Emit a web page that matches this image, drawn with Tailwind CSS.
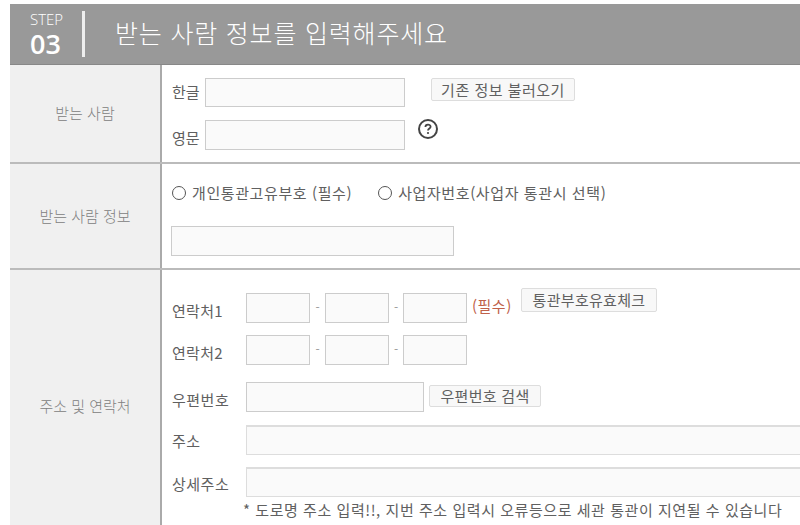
<!DOCTYPE html>
<html lang="ko">
<head>
  <meta charset="UTF-8" />
  <title>받는 사람 정보</title>
  <script src="https://cdn.jsdelivr.net/npm/@tailwindcss/browser@4"></script>
</head>
<body class="bg-white w-[800px] h-[525px] overflow-hidden font-['Noto_Sans_CJK_KR',sans-serif] text-[15px] text-[#606060]">
  <div class="pl-[10px] pt-[4px]">

    <!-- Header -->
    <header class="h-[61px] bg-[#999] border-b border-[#888] flex items-center text-white">
      <div class="w-[44px] ml-[20px] font-['Open_Sans',sans-serif]">
        <div class="text-[15px] leading-[15px] font-light mb-[5px]">STEP</div>
        <div class="text-[27px] leading-[24px] font-semibold">03</div>
      </div>
      <div class="w-[3px] h-[46px] bg-[#eee] ml-[8px]"></div>
      <h1 class="ml-[30px] text-[25px] font-light tracking-[0.8px] -mt-[2px]">받는 사람 정보를 입력해주세요</h1>
    </header>

    <!-- Row 1 -->
    <section class="flex h-[99px] border-b-2 border-[#bbb]">
      <div class="w-[152px] bg-[#f0f0f0] border-r-2 border-[#aaa] flex items-center justify-center text-[#808080] font-light">받는 사람</div>
      <div class="flex-1 pl-[10px] pt-[13px]">
        <div class="flex">
          <span class="w-[33px] pt-[2px] leading-[24px]">한글</span>
          <input class="w-[200px] h-[29px] bg-[#fafafa] border border-[#ccc]" />
          <button class="ml-[26px] w-[144px] h-[23px] leading-[19px] bg-[#f8f8f8] border border-[#ddd] rounded-[2px] tracking-[0.5px]">기존 정보 불러오기</button>
        </div>
        <div class="flex mt-[13px]">
          <span class="w-[33px] pt-[6px] leading-[24px]">영문</span>
          <input class="w-[200px] h-[30px] bg-[#fafafa] border border-[#ccc]" />
          <svg class="ml-[12px] -mt-[2px]" width="22" height="22" viewBox="0 0 22 22">
            <circle cx="11" cy="11" r="9" fill="none" stroke="#444" stroke-width="2" />
            <path d="M8.4 9 C8.4 5.8 13.6 5.8 13.6 8.8 C13.6 10.6 11 10.6 11 12.6" fill="none" stroke="#444" stroke-width="1.8" />
            <circle cx="11" cy="15" r="1.1" fill="#444" />
          </svg>
        </div>
      </div>
    </section>

    <!-- Row 2 -->
    <section class="flex h-[106px] border-b-2 border-[#bbb]">
      <div class="w-[152px] bg-[#f0f0f0] border-r-2 border-[#aaa] flex items-center justify-center text-[#808080] font-light">받는 사람 정보</div>
      <div class="flex-1 pl-[9px] pt-[18px]">
        <div class="flex items-center h-[22px]">
          <span class="w-[14px] h-[14px] rounded-full border border-[#555] ml-[1px]"></span>
          <span class="ml-[6px] tracking-[0.6px]">개인통관고유부호 (필수)</span>
          <span class="w-[14px] h-[14px] rounded-full border border-[#555] ml-[26px]"></span>
          <span class="ml-[6px] tracking-[0.6px]">사업자번호(사업자 통관시 선택)</span>
        </div>
        <input class="block mt-[22px] w-[283px] h-[30px] bg-[#fafafa] border border-[#ccc]" />
      </div>
    </section>

    <!-- Row 3 -->
    <section class="flex h-[272px]">
      <div class="w-[152px] bg-[#f0f0f0] border-r-2 border-[#aaa] flex items-center justify-center text-[#808080] font-light">주소 및 연락처</div>
      <div class="flex-1 pl-[9px] pt-[23px] min-w-0">
        <div class="flex h-[30px]">
          <span class="w-[75px] pl-[1px] pt-[6px] leading-[24px] tracking-[0.3px]">연락처1</span>
          <input class="w-[64px] h-[30px] bg-[#fafafa] border border-[#ccc]" />
          <span class="w-[15px] text-center text-[12px] leading-[28px] text-[#999]">-</span>
          <input class="w-[64px] h-[30px] bg-[#fafafa] border border-[#ccc]" />
          <span class="w-[14px] text-center text-[12px] leading-[28px] text-[#999]">-</span>
          <input class="w-[64px] h-[30px] bg-[#fafafa] border border-[#ccc]" />
          <span class="w-[45px] pl-[5px] text-[#c0614a] leading-[26px] whitespace-nowrap tracking-[0.5px]">(필수)</span>
          <button class="ml-[9px] -mt-[5px] w-[136px] h-[24px] leading-[20px] bg-[#f8f8f8] border border-[#ddd] rounded-[2px] tracking-[0.3px]">통관부호유효체크</button>
        </div>
        <div class="flex h-[30px] mt-[12px]">
          <span class="w-[75px] pl-[1px] pt-[6px] leading-[24px] tracking-[0.3px]">연락처2</span>
          <input class="w-[64px] h-[30px] bg-[#fafafa] border border-[#ccc]" />
          <span class="w-[15px] text-center text-[12px] leading-[28px] text-[#999]">-</span>
          <input class="w-[64px] h-[30px] bg-[#fafafa] border border-[#ccc]" />
          <span class="w-[14px] text-center text-[12px] leading-[28px] text-[#999]">-</span>
          <input class="w-[64px] h-[30px] bg-[#fafafa] border border-[#ccc]" />
        </div>
        <div class="flex h-[30px] mt-[17px]">
          <span class="w-[75px] pl-[1px] leading-[36px] tracking-[0.5px]">우편번호</span>
          <input class="w-[178px] h-[30px] bg-[#fafafa] border border-[#ccc]" />
          <button class="ml-[5px] mt-[3px] w-[112px] h-[22px] leading-[18px] bg-[#f8f8f8] border border-[#ddd] rounded-[2px] tracking-[0.3px]">우편번호 검색</button>
        </div>
        <div class="flex h-[30px] mt-[13px]">
          <span class="w-[75px] pl-[1px] leading-[32px] tracking-[0.5px]">주소</span>
          <input class="flex-1 h-[30px] bg-[#fafafa] border border-[#ddd] border-t-2 border-r-0" />
        </div>
        <div class="flex h-[30px] mt-[12px]">
          <span class="w-[75px] pl-[1px] leading-[34px] tracking-[0.5px]">상세주소</span>
          <input class="flex-1 h-[30px] bg-[#fafafa] border border-[#ddd] border-t-2 border-r-0" />
        </div>
        <p class="ml-[72px] mt-[3px] leading-[20px] whitespace-nowrap tracking-[0.55px]">* 도로명 주소 입력!!, 지번 주소 입력시 오류등으로 세관 통관이 지연될 수 있습니다</p>
      </div>
    </section>
  </div>
</body>
</html>
